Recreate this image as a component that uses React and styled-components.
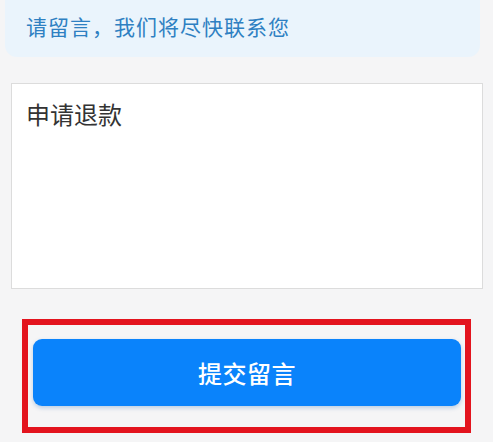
import React from "react";
import styled, { createGlobalStyle } from "styled-components";

const GlobalStyle = createGlobalStyle`
  html, body {
    margin: 0;
    padding: 0;
    background: #f5f5f6;
  }
  body {
    font-family: "Noto Sans CJK SC", "Noto Sans", sans-serif;
  }
`;

const Page = styled.div`
  width: 493px;
  height: 442px;
  overflow: hidden;
  background: #f5f5f6;
  display: flex;
  flex-direction: column;
`;

const Notice = styled.div`
  margin: 0 13px 0 5px;
  height: 57px;
  box-sizing: border-box;
  padding: 0 0 5px 21px;
  display: flex;
  align-items: center;
  background: #eaf4fc;
  border-radius: 0 0 12px 12px;
  color: #2e80c2;
  font-size: 21px;
  letter-spacing: 1px;
`;

const MessageBox = styled.div`
  margin: 26px 10px 0 11px;
  height: 206px;
  box-sizing: border-box;
  background: #fff;
  border: 1px solid #dcdcdc;
  padding: 12px 14px;
  color: #333;
  font-size: 24px;
  line-height: 36px;
`;

const Highlight = styled.div`
  margin: 30px 22px 0 22px;
  height: 114px;
  box-sizing: border-box;
  border: 6px solid #e3141e;
  padding: 14px 4px 0 5px;
`;

const SubmitButton = styled.button`
  display: block;
  width: 100%;
  height: 67px;
  border: none;
  border-radius: 9px;
  background: #0a83fb;
  color: #fff;
  font-family: "Noto Sans CJK SC", "Noto Sans", sans-serif;
  font-size: 24px;
  font-weight: 500;
  letter-spacing: 0.5px;
  box-shadow: 0 2px 4px rgba(10, 90, 180, 0.25);
  cursor: pointer;
`;

export default function App() {
  return (
    <>
      <GlobalStyle />
      <Page>
        <Notice>请留言，我们将尽快联系您</Notice>
        <MessageBox>申请退款</MessageBox>
        <Highlight>
          <SubmitButton>提交留言</SubmitButton>
        </Highlight>
      </Page>
    </>
  );
}
